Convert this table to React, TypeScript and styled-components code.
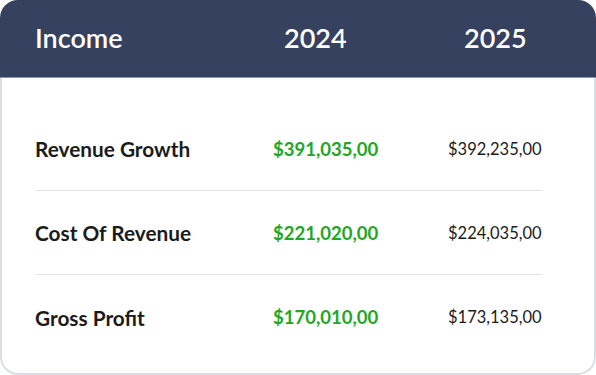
import * as React from "react";
import styled, { createGlobalStyle } from "styled-components";

const GlobalStyle = createGlobalStyle`
  html, body {
    margin: 0;
    padding: 0;
    background: #ffffff;
  }
  body {
    font-family: Lato, "Open Sans", sans-serif;
  }
`;

const Card = styled.div`
  display: flex;
  flex-direction: column;
  width: 596px;
  height: 375px;
  border-radius: 18px;
  overflow: hidden;
  background: #ffffff;
`;

const Header = styled.div`
  display: grid;
  grid-template-columns: 249px 180px 1fr;
  align-items: center;
  height: 78px;
  flex-shrink: 0;
  padding-left: 35px;
  background: #36415f;
  border-bottom: 1px solid #8a93aa;
  box-sizing: border-box;
`;

const HeaderCell = styled.div`
  color: #ffffff;
  font-size: 27px;
  font-weight: 600;
  padding-bottom: 2px;
`;

const Body = styled.div`
  flex: 1;
  box-sizing: border-box;
  padding: 29px 52px 0 33px;
  border: 2px solid #dadde4;
  border-top: none;
  border-radius: 0 0 18px 18px;
`;

const Row = styled.div`
  display: grid;
  grid-template-columns: 238px 175px 1fr;
  align-items: center;
  height: 84px;
  box-sizing: border-box;
  border-bottom: ${(props: { last?: boolean }) =>
    props.last ? "none" : "1px solid #e3e4e8"};
`;

const Label = styled.div`
  font-size: 20.8px;
  font-weight: 700;
  color: #1b1b1b;
`;

const Value = styled.div`
  font-weight: ${(props: { current?: boolean }) =>
    props.current ? 700 : 400};
  color: ${(props: { current?: boolean }) =>
    props.current ? "#1ea722" : "#1b1b1b"};
  ${(props: { current?: boolean }) =>
    props.current
      ? "font-size: 18.5px;"
      : "font-size: 16.5px; text-align: right; padding-right: 1px;"}
`;

const rows = [
  { label: "Revenue Growth", y2024: "$391,035,00", y2025: "$392,235,00" },
  { label: "Cost Of Revenue", y2024: "$221,020,00", y2025: "$224,035,00" },
  { label: "Gross Profit", y2024: "$170,010,00", y2025: "$173,135,00" }
];

export default function App() {
  return (
    <>
      <GlobalStyle />
      <Card>
        <Header>
          <HeaderCell>Income</HeaderCell>
          <HeaderCell>2024</HeaderCell>
          <HeaderCell>2025</HeaderCell>
        </Header>
        <Body>
          {rows.map((row, idx) => (
            <Row key={row.label} last={idx === rows.length - 1}>
              <Label>{row.label}</Label>
              <Value current>{row.y2024}</Value>
              <Value>{row.y2025}</Value>
            </Row>
          ))}
        </Body>
      </Card>
    </>
  );
}
